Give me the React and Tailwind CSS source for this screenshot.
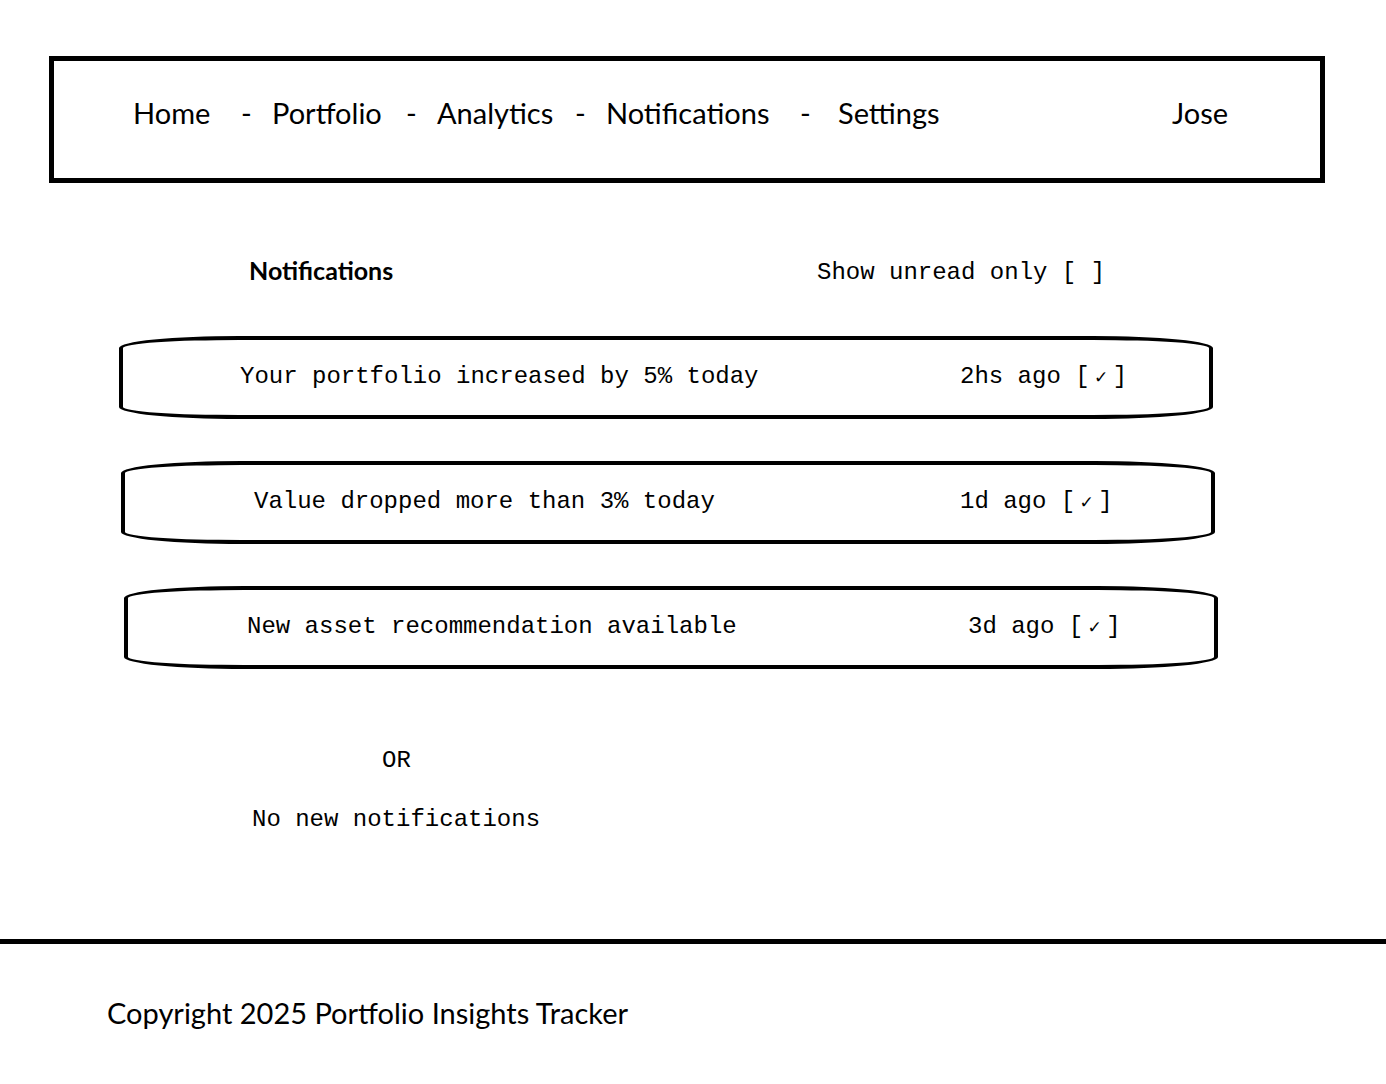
import React from "react";

const sans = { fontFamily: "Lato, 'Open Sans', sans-serif" };

function Check() {
  return (
    <>
      [<span className="inline-block w-[23px] text-center text-[17px] font-['DejaVu_Sans',sans-serif]">✓</span>]
    </>
  );
}

function Pill({ left, msgOffset, timeOffset, msg, time }) {
  return (
    <div
      className="h-[83px] w-[1094px] border-[4px] border-black rounded-[120px/12px] flex items-center pb-[2px]"
      style={{ marginLeft: left }}
    >
      <span className="inline-block shrink-0" style={{ width: msgOffset - 4 }} />
      <span className="inline-block shrink-0 whitespace-pre" style={{ width: timeOffset - msgOffset }}>
        {msg}
      </span>
      <span className="whitespace-pre">
        {time}
        <Check />
      </span>
    </div>
  );
}

export default function App() {
  const navItems = [
    ["Home", 108],
    ["-", 31],
    ["Portfolio", 134],
    ["-", 31],
    ["Analytics", 138],
    ["-", 31],
    ["Notifications", 194],
    ["-", 38],
    ["Settings", 334],
    ["Jose", 80],
  ];
  return (
    <div className="w-[1386px] h-[1084px] bg-white text-black overflow-hidden">
      <div
        className="mt-[56px] ml-[49px] w-[1276px] h-[127px] border-[5px] border-black flex items-center pl-[79px] pb-[14px] text-[29px] leading-[32px]"
        style={sans}
      >
        {navItems.map(([t, w], i) => (
          <span key={i} className="inline-block shrink-0 whitespace-pre" style={{ width: w }}>
            {t}
          </span>
        ))}
      </div>

      <div className="mt-[72px] flex items-start leading-[30px]">
        <span className="ml-[249px] w-[568px] text-[25px] font-bold" style={sans}>
          Notifications
        </span>
        <span className="mt-[3px] font-['Liberation_Mono',monospace] text-[24px] whitespace-pre">
          Show unread only [ ]
        </span>
      </div>

      <div className="mt-[48px] flex flex-col gap-[42px] font-['Liberation_Mono',monospace] text-[24px] leading-[28px]">
        <Pill left={119} msgOffset={121} timeOffset={841} msg="Your portfolio increased by 5% today" time="2hs ago " />
        <Pill left={121} msgOffset={133} timeOffset={839} msg="Value dropped more than 3% today" time="1d ago " />
        <Pill left={124} msgOffset={123} timeOffset={844} msg="New asset recommendation available" time="3d ago " />
      </div>

      <div className="mt-[78px] ml-[382px] font-['Liberation_Mono',monospace] text-[24px] leading-[28px]">OR</div>
      <div className="mt-[31px] ml-[252px] font-['Liberation_Mono',monospace] text-[24px] leading-[28px]">
        No new notifications
      </div>

      <div className="mt-[105px] h-[5px] w-full bg-black" />

      <div className="mt-[52px] ml-[107px] text-[29px] leading-[34px]" style={sans}>
        Copyright 2025 Portfolio Insights Tracker
      </div>
    </div>
  );
}
